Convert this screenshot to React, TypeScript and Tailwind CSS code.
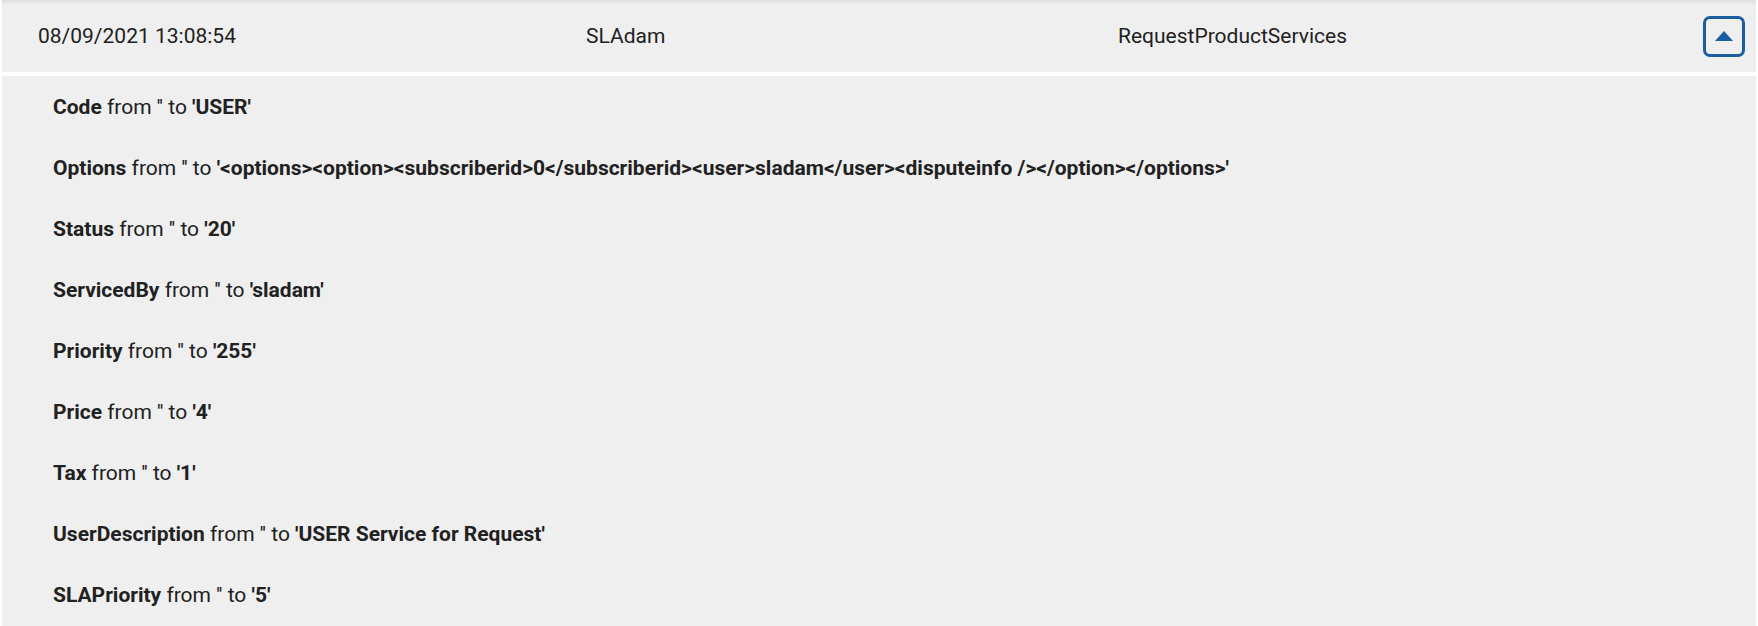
import React from "react";

const rows: [string, string][] = [
  ["Code", "'USER'"],
  ["Options", "'<options><option><subscriberid>0</subscriberid><user>sladam</user><disputeinfo /></option></options>'"],
  ["Status", "'20'"],
  ["ServicedBy", "'sladam'"],
  ["Priority", "'255'"],
  ["Price", "'4'"],
  ["Tax", "'1'"],
  ["UserDescription", "'USER Service for Request'"],
  ["SLAPriority", "'5'"],
];

export default function App() {
  return (
    <div
      className="w-full h-[626px] overflow-hidden bg-white px-[2px] text-[#212121]"
      style={{ fontFamily: "Roboto, 'Noto Sans', sans-serif" }}
    >
      <div className="flex h-[72px] items-center bg-[#efefef] pl-[36px] pr-[11px] pt-[2px] text-[21px] shadow-[inset_0_4px_4px_-2px_rgba(0,0,0,0.08)]">
        <div className="w-[548px] shrink-0">08/09/2021 13:08:54</div>
        <div className="w-[532px] shrink-0">SLAdam</div>
        <div className="flex-1">RequestProductServices</div>
        <button className="-mt-[2px] flex h-[41px] w-[42px] items-center justify-center rounded-[7px] border-[3px] border-[#1b5ea0] bg-transparent">
          <svg width="18" height="10" viewBox="0 0 18 10">
            <path d="M9 0 L18 10 L0 10 Z" fill="#1b5ea0" />
          </svg>
        </button>
      </div>
      <div className="mt-[4px] h-[560px] bg-[#efefef] pl-[51px] pt-[1px] text-[21px]">
        {rows.map(([k, v]) => (
          <div key={k} className="flex h-[61px] items-center">
            <span>
              <b className="font-bold">{k}</b> from '' to <b className="font-bold">{v}</b>
            </span>
          </div>
        ))}
      </div>
    </div>
  );
}
